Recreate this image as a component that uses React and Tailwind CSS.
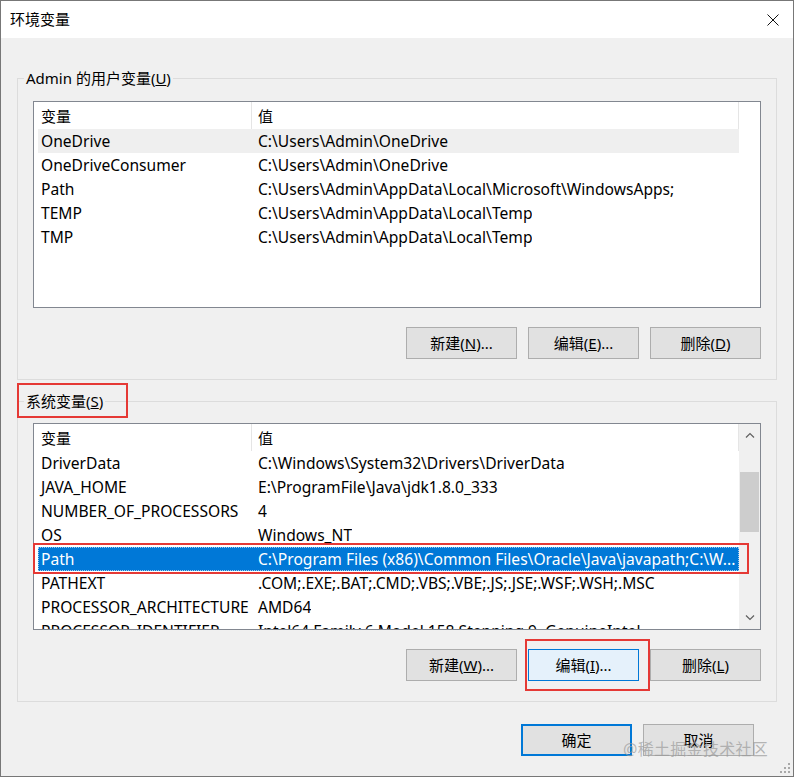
import React from 'react';

const userVars = [
  ['OneDrive', 'C:\\Users\\Admin\\OneDrive'],
  ['OneDriveConsumer', 'C:\\Users\\Admin\\OneDrive'],
  ['Path', 'C:\\Users\\Admin\\AppData\\Local\\Microsoft\\WindowsApps;'],
  ['TEMP', 'C:\\Users\\Admin\\AppData\\Local\\Temp'],
  ['TMP', 'C:\\Users\\Admin\\AppData\\Local\\Temp'],
];

const sysVars = [
  ['DriverData', 'C:\\Windows\\System32\\Drivers\\DriverData'],
  ['JAVA_HOME', 'E:\\ProgramFile\\Java\\jdk1.8.0_333'],
  ['NUMBER_OF_PROCESSORS', '4'],
  ['OS', 'Windows_NT'],
  ['Path', 'C:\\Program Files (x86)\\Common Files\\Oracle\\Java\\javapath;C:\\W...'],
  ['PATHEXT', '.COM;.EXE;.BAT;.CMD;.VBS;.VBE;.JS;.JSE;.WSF;.WSH;.MSC'],
  ['PROCESSOR_ARCHITECTURE', 'AMD64'],
  ['PROCESSOR_IDENTIFIER', 'Intel64 Family 6 Model 158 Stepping 9, GenuineIntel'],
];

const Header = () => (
  <div className="flex h-[27px] shrink-0 text-[15px]">
    <div className="w-[218px] h-full flex items-center pl-[7px] pt-[1px] border-r border-[#e5e5e5]">变量</div>
    <div className="w-[487px] h-full flex items-center pl-[6px] pt-[1px] border-r border-[#e5e5e5]">值</div>
  </div>
);

const Row = ({ name, value, hover, selected }) => (
  <div
    className={`flex h-[24px] w-[701px] shrink-0 items-center pt-[2px] whitespace-nowrap text-[15.6px] ${
      hover ? 'bg-[#efefef]' : ''
    } ${selected ? 'bg-[#0078d7] text-white outline-1 outline-dotted outline-[#9cc9f0] -outline-offset-1' : ''}`}
  >
    <div className="w-[217px] shrink-0 pl-[3px]">{name}</div>
    <div className="pl-[3px] overflow-hidden">{value}</div>
  </div>
);

const Btn = ({ children, variant, className = '' }) => {
  const styles = {
    normal: 'bg-[#e1e1e1] border border-[#adadad]',
    hot: 'bg-[#e5f1fb] border border-[#0078d7]',
    default: 'bg-[#e1e1e1] border-2 border-[#0078d7]',
  };
  return (
    <div className={`relative w-[111px] h-[32px] flex items-center justify-center ${styles[variant || 'normal']} ${className}`}>
      {children}
    </div>
  );
};

const Chevron = ({ up }) => (
  <svg width="10" height="6" viewBox="0 0 10 6">
    <path d={up ? 'M1 5.5 L5 1.5 L9 5.5' : 'M1 0.5 L5 4.5 L9 0.5'} fill="none" stroke="#606060" strokeWidth="1.2" />
  </svg>
);

export default function App() {
  return (
    <div className="relative w-[794px] h-[777px] border border-[#777] bg-[#f0f0f0] flex flex-col text-[15px] text-black font-['Noto_Sans','Noto_Sans_CJK_SC',sans-serif] overflow-hidden">
      {/* Title bar */}
      <div className="h-[37px] shrink-0 bg-white flex items-center justify-between pl-[9px] pr-[14px]">
        <span>环境变量</span>
        <svg width="12" height="12" viewBox="0 0 12 12">
          <path d="M0.5 0.5 L11.5 11.5 M11.5 0.5 L0.5 11.5" stroke="#111" strokeWidth="1" />
        </svg>
      </div>

      <div className="flex-1 pl-[16px] pr-[16px] pt-[30px]">
        {/* User variables */}
        <fieldset className="border border-[#dcdcdc] p-0 m-0">
          <legend className="ml-[6px] px-[2px] h-[20px] leading-[20px]">
            Admin 的用户变量(<u>U</u>)
          </legend>
          <div className="px-[15px] pb-[20px]">
            <div className="mt-[13px] h-[207px] border border-[#828790] bg-white flex flex-col overflow-hidden">
              <Header />
              <div className="pl-[4px] flex flex-col">
                {userVars.map(([n, v], i) => (
                  <Row key={n} name={n} value={v} hover={i === 0} />
                ))}
              </div>
            </div>
            <div className="mt-[19px] flex justify-end gap-[11px]">
              <Btn>新建(<u>N</u>)...</Btn>
              <Btn>编辑(<u>E</u>)...</Btn>
              <Btn>删除(<u>D</u>)</Btn>
            </div>
          </div>
        </fieldset>

        {/* System variables */}
        <fieldset className="mt-[11px] border border-[#dcdcdc] p-0 m-0">
          <legend className="relative ml-[6px] px-[2px] h-[20px] leading-[20px]">
            系统变量(<u>S</u>)
            <div className="absolute -left-[7px] -top-[8px] w-[111px] h-[35px] border-2 border-[#e53935]" />
          </legend>
          <div className="px-[15px] pb-[20px]">
            <div className="relative mt-[12px] h-[207px] border border-[#828790] bg-white flex">
              <div className="flex-1 flex flex-col overflow-hidden">
                <Header />
                <div className="pl-[4px] flex flex-col">
                  {sysVars.map(([n, v], i) => (
                    <Row key={n} name={n} value={v} selected={i === 4} />
                  ))}
                </div>
              </div>
              <div className="w-[21px] shrink-0 bg-[#f0f0f0] flex flex-col items-center">
                <div className="h-[22px] w-full flex items-center justify-center">
                  <Chevron up />
                </div>
                <div className="mt-[26px] w-[19px] h-[60px] bg-[#cdcdcd]" />
                <div className="flex-1" />
                <div className="h-[22px] w-full flex items-center justify-center">
                  <Chevron />
                </div>
              </div>
              <div className="absolute -left-[1px] top-[119px] w-[716px] h-[31px] border-2 border-[#e53935]" />
            </div>
            <div className="mt-[19px] flex justify-end gap-[11px]">
              <Btn>新建(<u>W</u>)...</Btn>
              <Btn variant="hot">
                编辑(<u>I</u>)...
                <div className="absolute -left-[4px] -top-[11px] w-[125px] h-[52px] border-2 border-[#e53935]" />
              </Btn>
              <Btn>删除(<u>L</u>)</Btn>
            </div>
          </div>
        </fieldset>

        <div className="mt-[22px] pr-[23px] flex justify-end gap-[11px]">
          <Btn variant="default">确定</Btn>
          <Btn>取消</Btn>
        </div>
      </div>

      {/* watermark */}
      <div className="absolute left-[622px] top-[736px] text-[16px] text-[#9a9a9a]/70 tracking-[0.3px]">
        @稀土掘金技术社区
      </div>

      {/* resize grip */}
      <svg className="absolute right-[2px] bottom-[2px]" width="11" height="11" viewBox="0 0 11 11">
        {[
          [8, 0], [8, 4], [4, 4], [8, 8], [4, 8], [0, 8],
        ].map(([x, y]) => (
          <rect key={`${x}-${y}`} x={x} y={y} width="2" height="2" fill="#a8a8a8" />
        ))}
      </svg>
    </div>
  );
}
